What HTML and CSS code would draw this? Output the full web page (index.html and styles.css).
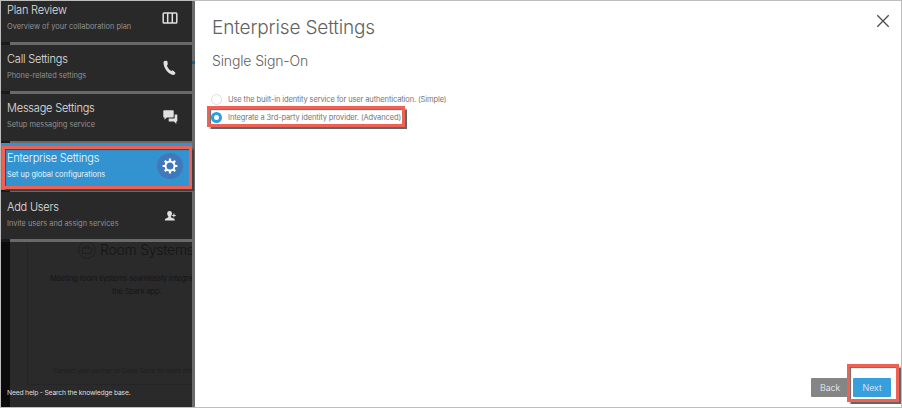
FILE: index.html
```html
<!DOCTYPE html>
<html lang="en">
<head>
<meta charset="utf-8">
<title>Enterprise Settings</title>
<link rel="stylesheet" href="styles.css">
</head>
<body>
<div class="window">
  <aside class="sidebar">
    <div class="backdrop">
      <div class="card">
        <div class="card-title">
          <svg width="18" height="18" viewBox="0 0 18 18" fill="none" stroke="currentColor" stroke-width=".8"><circle cx="9" cy="9" r="8.3"/><rect x="4.5" y="7" width="9" height="5.5"/><path d="M7 7V5h4v2"/></svg>
          <span>Room Systems</span>
        </div>
        <p class="card-text">Meeting room systems seamlessly integra</p>
        <p class="card-text second">the Spark app.</p>
        <p class="card-note">Contact your partner or Cisco Sales for more info</p>
      </div>
    </div>
    <span class="edge"></span>
    <nav class="steps">
      <a class="step first">
        <span class="labels"><b>Plan Review</b><small>Overview of your collaboration plan</small></span>
        <svg class="icon" viewBox="0 0 26 26" fill="none" stroke="currentColor" stroke-width="1.5"><rect x="6.2" y="8.1" width="13.6" height="10" rx=".8"/><path d="M10.7 8v10M15.3 8v10"/></svg>
      </a>
      <a class="step">
        <span class="labels"><b>Call Settings</b><small>Phone-related settings</small></span>
        <svg class="icon" viewBox="0 0 26 26" fill="currentColor"><path d="M7.2 5.9L9.6 5.7Q10.2 5.7 10.3 6.3L10.9 9.3L9.9 10.4C10.7 12.7 12.3 14.7 14.3 16L15.7 15.3L18.2 17.5Q18.6 18 18.3 18.5L17.2 20C11.5 19.9 6.3 13.2 6.5 7Z"/></svg>
      </a>
      <a class="step">
        <span class="labels"><b>Message Settings</b><small>Setup messaging service</small></span>
        <svg class="icon" viewBox="0 0 26 26" fill="currentColor"><path d="M7 6.3h9q.7 0 .7.7v5.7q0 .7-.7.7H9.8L7.5 15.8v-2.4H7q-.7 0-.7-.7V7q0-.7.7-.7Z"/><path d="M17.7 10.4h2q.6 0 .6.6v6q0 .6-.6.6h-.4V20l-2.3-2.4h-4.7q-.6 0-.6-.6v-2.6h5.1q.9 0 .9-.9Z"/></svg>
      </a>
      <a class="step active">
        <span class="labels"><b>Enterprise Settings</b><small>Set up global configurations</small></span>
        <svg class="icon" viewBox="0 0 26 26"><circle cx="13" cy="13" r="13" fill="#4078bc"/><g fill="none" stroke="#fff"><circle cx="13" cy="13" r="4.5" stroke-width="2"/><path stroke-width="2.2" d="M13 8.2V5.6M13 17.8v2.6M8.2 13H5.6M17.8 13h2.6M9.6 9.6L7.8 7.8M16.4 16.4l1.8 1.8M9.6 16.4l-1.8 1.8M16.4 9.6l1.8-1.8"/></g></svg>
      </a>
      <a class="step">
        <span class="labels"><b>Add Users</b><small>Invite users and assign services</small></span>
        <svg class="icon" viewBox="0 0 26 26" fill="currentColor"><path d="M12.6 8C14.3 8 15.1 9.2 15 10.8C14.9 12 14.5 12.8 13.9 13.4V14.3L17.1 15.7Q17.8 16 17.8 17.5H7.8Q7.8 16 8.5 15.7L11.4 14.3V13.4C10.7 12.8 10.3 12 10.2 10.8C10.1 9.2 10.9 8 12.6 8Z"/><path d="M16.4 10.6v1.3h-1.2v1h1.2v1.3h1v-1.3h1.3v-1h-1.3v-1.3Z"/></svg>
      </a>
    </nav>
    <p class="help">Need help - Search the knowledge base.</p>
    <span class="tick"></span>
    <span class="highlight nav-highlight"></span>
  </aside>
  <main class="content">
    <header class="heading">
      <h1>Enterprise Settings</h1>
      <svg class="close" viewBox="0 0 14 14" stroke="#4c4c4c" stroke-width="1.3"><path d="M1.3 1.3l11.4 11.4M12.7 1.3L1.3 12.7"/></svg>
    </header>
    <h2>Single Sign-On</h2>
    <div class="options">
      <label class="option"><span class="radio"></span><span>Use the built-in identity service for user authentication. (Simple)</span></label>
      <label class="option"><span class="radio checked"></span><span>Integrate a 3rd-party identity provider. (Advanced)</span><span class="highlight option-highlight"></span></label>
    </div>
    <footer class="actions">
      <span class="button back">Back</span>
      <span class="button next">Next<span class="highlight next-highlight"></span></span>
    </footer>
  </main>
</div>
</body>
</html>
```
FILE: styles.css
```css
* { box-sizing: border-box; }
body { margin: 0; font-family: Inter, "Liberation Sans", sans-serif; }
h1, h2, p { margin: 0; font-weight: 300; }
.window { width: 902px; height: 408px; border: 1px solid #bdbdbd; display: grid; grid-template-columns: 194px 1fr; background: #fff; overflow: hidden; white-space: nowrap; }

.sidebar { position: relative; display: flex; flex-direction: column; background: #2a2a2a; }
.backdrop { position: absolute; inset: 0; border-left: 9px solid #0b0b0b; }
.edge { position: absolute; top: 0; right: 0; bottom: 0; width: 3px; background: rgba(125, 125, 125, .78); }
.card { position: absolute; left: 17px; top: 230px; width: 168px; height: 154px; border: 1px solid #252525; border-right: 0; color: #151515; }
.card-title { display: flex; align-items: center; gap: 4px; margin: 8px 0 0 50px; font-size: 14px; font-weight: 300; line-height: 20px; letter-spacing: -.26px; }
.card-title svg { flex: none; color: #1d1d1d; }
.card-text { margin: 12px 0 0 22px; font-size: 7.5px; line-height: 13px; font-weight: 400; letter-spacing: -.17px; }
.card-text.second { margin: 0 0 0 84px; }
.card-note { margin: 67px 0 0 25px; font-size: 6.8px; line-height: 12px; letter-spacing: -.3px; color: #1d1d1d; }

.steps { position: relative; display: flex; flex-direction: column; gap: 2.5px; width: 191px; padding-bottom: 2.5px; background: linear-gradient(90deg, #1a1a1a 9px, #696969 9px); }
.step { display: flex; align-items: flex-start; justify-content: space-between; height: 46.8px; padding: 5px 8.7px 0 6px; background: #292929; color: #e0e0e0; }
.step.first { height: 41px; padding-top: 0; }
.step.active { background: #3293d0; color: #f0f8fd; }
.labels { display: flex; flex-direction: column; }
.labels b { margin-top: 2.4px; font-size: 11px; line-height: 14px; font-weight: 350; letter-spacing: -.2px; }
.labels small { margin-top: 4px; font-size: 7.4px; line-height: 12px; color: #929292; }
.first .labels b { margin-top: 1.6px; }
.active .labels b { margin-top: 2.8px; font-weight: 300; letter-spacing: -.2px; }
.active .labels small { color: #e9f5fc; }
.icon { flex: none; width: 26px; height: 26px; margin-top: 5.3px; }
.first .icon { margin-top: 4px; }
.help { position: relative; margin: auto 0 8px 6px; font-size: 6.8px; line-height: 12px; font-weight: 400; letter-spacing: -.2px; color: #ddd; }
.tick { position: absolute; right: 0; top: 60px; width: 3px; height: 3px; background: #17608c; }

.content { display: flex; flex-direction: column; color: #626262; }
.heading { display: flex; justify-content: space-between; padding: 13px 11px 0 17px; }
h1 { font-size: 19px; line-height: 27px; letter-spacing: -.15px; }
.close { width: 14px; height: 14px; }
h2 { margin: 10px 0 0 17px; font-size: 14px; line-height: 20px; letter-spacing: -.14px; }
.options { margin: 19px 0 0 16px; }
.option { position: relative; display: flex; align-items: center; gap: 6px; width: max-content; height: 18px; font-size: 7.5px; letter-spacing: -.12px; color: #757575; }
.radio { width: 11px; height: 11px; border: 1px solid #ddd; border-radius: 50%; }
.radio.checked { border: 3px solid #2e9fdf; }
.actions { display: flex; gap: 4px; margin: auto 10px 10px auto; }
.button { position: relative; width: 38px; height: 19px; font-size: 8.8px; font-weight: 350; line-height: 19px; text-align: center; color: #f1f7fa; border-radius: 1px; }
.back { background: #858585; }
.next { background: #389fdd; }

.highlight { position: absolute; border: 3px solid #ee6255; box-shadow: 1.5px 1.5px 1px rgba(50, 50, 50, .75), inset 1px 1px 1px rgba(50, 50, 50, .75); }
.nav-highlight { left: 1px; top: 145px; width: 190px; height: 43px; }
.option-highlight { left: -4px; top: -2px; width: 198px; height: 21px; }
.next-highlight { left: -6px; top: -14px; width: 52px; height: 38px; }
```
